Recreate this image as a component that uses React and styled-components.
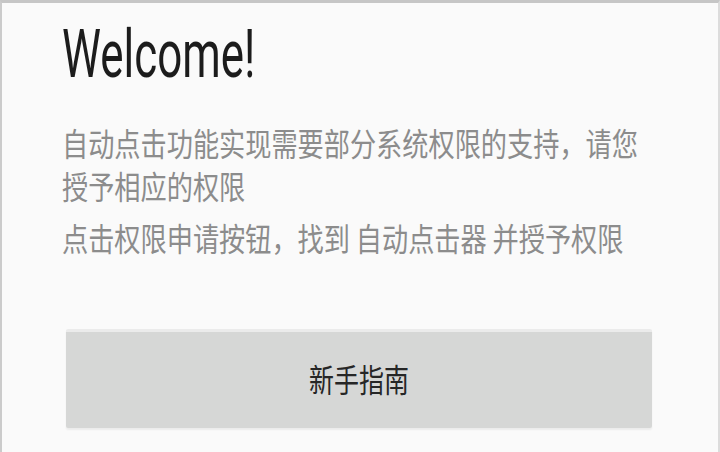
import React from 'react';
import styled, { createGlobalStyle } from 'styled-components';

const GlobalStyle = createGlobalStyle`
  html, body {
    margin: 0;
    padding: 0;
    background: #fafafa;
  }
  #root {
    width: 720px;
    height: 452px;
  }
`;

const Frame = styled.div`
  box-sizing: border-box;
  width: 720px;
  height: 452px;
  overflow: hidden;
  background: #fafafa;
  border-top: 3px solid #c6c6c6;
  border-left: 2px solid #cbcbcb;
  border-right: 2px solid #dcdcdc;
  padding: 18px 0 0 60px;
  display: flex;
  flex-direction: column;
`;

const Title = styled.h1`
  margin: 0;
  height: 67px;
  font-family: Roboto, 'Liberation Sans', sans-serif;
  font-weight: 400;
  font-size: 67px;
  line-height: 67px;
  color: #1c1c1c;
  white-space: nowrap;
  transform: scaleX(0.655);
  transform-origin: left top;
`;

const Intro = styled.div`
  margin-top: 33px;
  display: flex;
  flex-direction: column;
  gap: 9px;
`;

const Text = styled.p`
  margin: 0;
  width: 715px;
  font-family: 'Noto Sans CJK SC', 'Noto Sans', sans-serif;
  font-size: 32px;
  line-height: 43px;
  color: #8c8c8c;
  transform: scaleX(0.818);
  transform-origin: left top;
`;

const GuideButton = styled.button`
  margin: 70px 0 0 4px;
  width: 586px;
  height: 99px;
  border: none;
  border-top: 3px solid #ebebeb;
  border-radius: 2px;
  background: #d6d7d6;
  box-shadow: 0 2px 2px rgba(0, 0, 0, 0.06);
  display: flex;
  align-items: center;
  justify-content: center;
  padding: 0 0 4px;
  cursor: pointer;
`;

const ButtonLabel = styled.span`
  font-family: 'Noto Sans CJK SC', 'Noto Sans', sans-serif;
  font-size: 32px;
  color: #262626;
  transform: scaleX(0.78);
`;

export default function App() {
  return (
    <>
      <GlobalStyle />
      <Frame>
        <Title>Welcome!</Title>
        <Intro>
          <Text>自动点击功能实现需要部分系统权限的支持，请您授予相应的权限</Text>
          <Text>点击权限申请按钮，找到 自动点击器 并授予权限</Text>
        </Intro>
        <GuideButton>
          <ButtonLabel>新手指南</ButtonLabel>
        </GuideButton>
      </Frame>
    </>
  );
}
